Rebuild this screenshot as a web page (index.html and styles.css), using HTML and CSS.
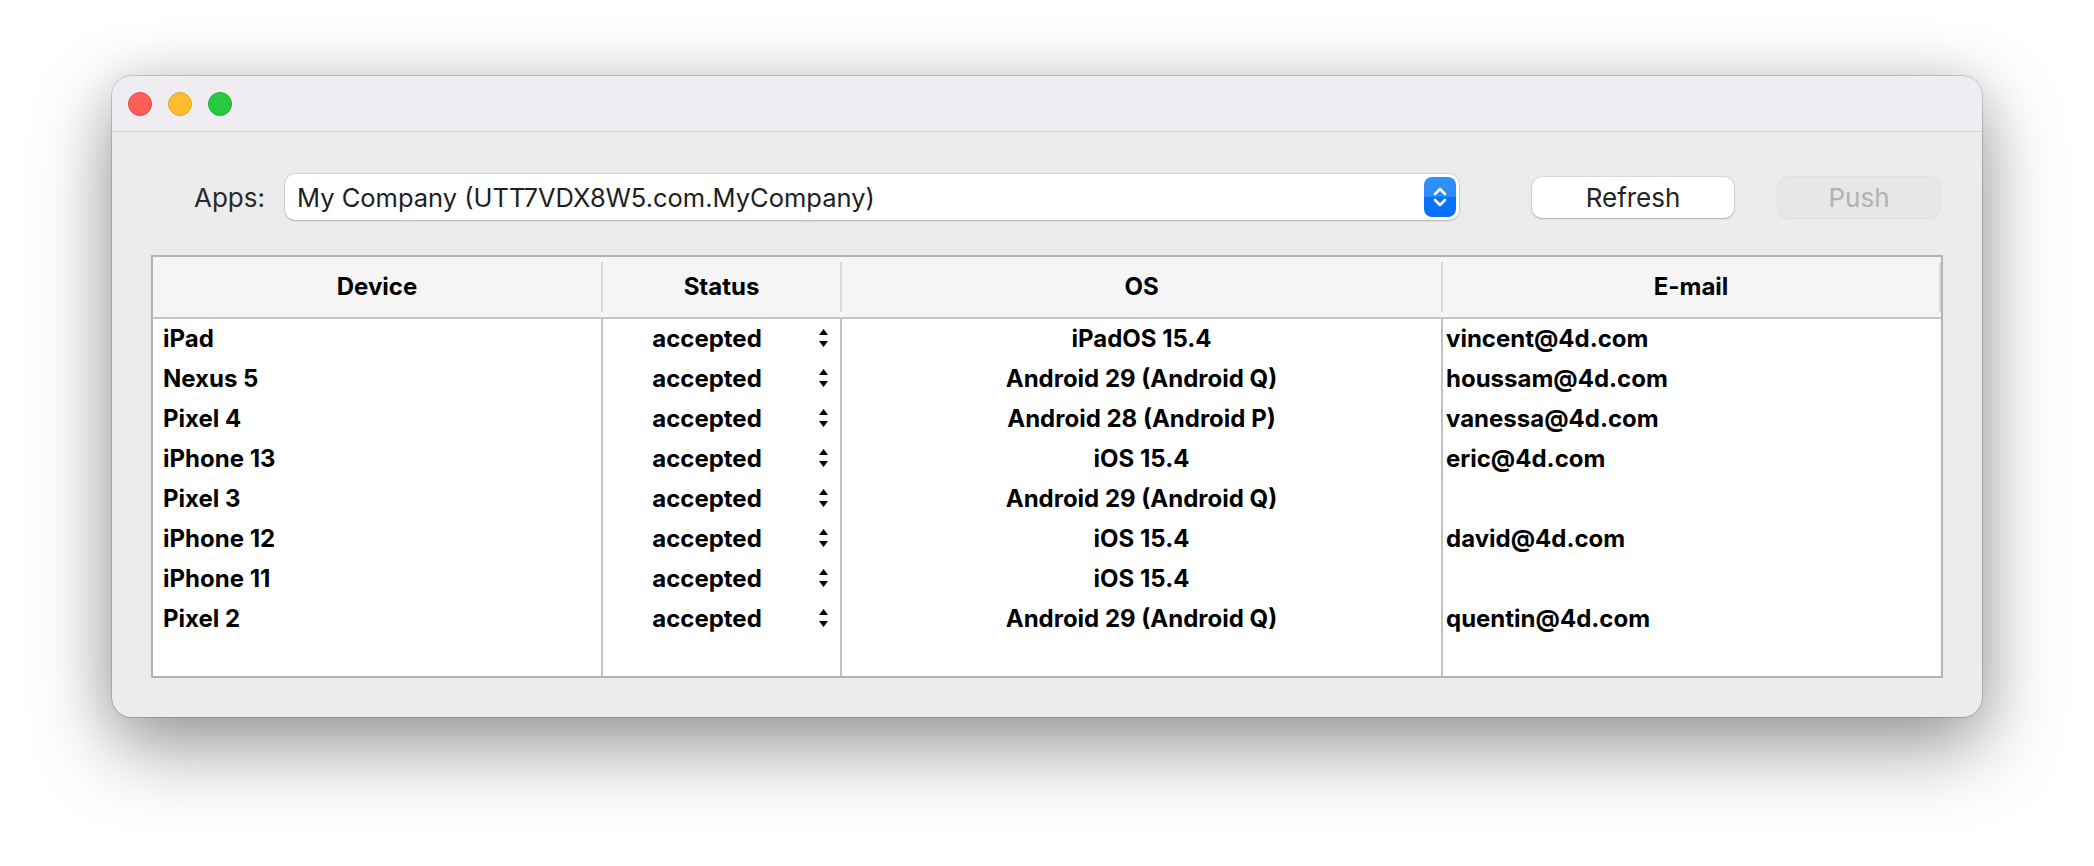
FILE: index.html
```html
<!DOCTYPE html>
<html>
<head>
<meta charset="utf-8">
<link rel="stylesheet" href="styles.css">
</head>
<body>
<div class="window">
  <div class="titlebar">
    <span class="light red"></span>
    <span class="light yellow"></span>
    <span class="light green"></span>
  </div>
  <div class="content">
    <div class="toolbar">
      <span class="label">Apps:</span>
      <div class="popup">
        <span class="popup-text">My Company (UTT7VDX8W5.com.MyCompany)</span>
        <span class="stepper">
          <svg width="32" height="40" viewBox="0 0 32 40"><path d="M11 17 L16 12 L21 17 M11 23 L16 28 L21 23" fill="none" stroke="#fff" stroke-width="2.6" stroke-linecap="round" stroke-linejoin="round"/></svg>
        </span>
      </div>
      <button class="btn refresh">Refresh</button>
      <button class="btn push">Push</button>
    </div>
    <div class="table">
      <div class="thead">
        <div class="th">Device</div>
        <div class="th">Status</div>
        <div class="th">OS</div>
        <div class="th">E-mail</div>
      </div>
      <div class="tbody">
        <div class="td dev">iPad</div><div class="td st"><span>accepted</span><svg width="9" height="18" viewBox="0 0 9 18"><path d="M0 6 L4.5 0 L9 6Z M0 12 L9 12 L4.5 18Z" fill="#000"/></svg></div><div class="td os">iPadOS 15.4</div><div class="td em">vincent@4d.com</div>
        <div class="td dev">Nexus 5</div><div class="td st"><span>accepted</span><svg width="9" height="18" viewBox="0 0 9 18"><path d="M0 6 L4.5 0 L9 6Z M0 12 L9 12 L4.5 18Z" fill="#000"/></svg></div><div class="td os">Android 29 (Android Q)</div><div class="td em">houssam@4d.com</div>
        <div class="td dev">Pixel 4</div><div class="td st"><span>accepted</span><svg width="9" height="18" viewBox="0 0 9 18"><path d="M0 6 L4.5 0 L9 6Z M0 12 L9 12 L4.5 18Z" fill="#000"/></svg></div><div class="td os">Android 28 (Android P)</div><div class="td em">vanessa@4d.com</div>
        <div class="td dev">iPhone 13</div><div class="td st"><span>accepted</span><svg width="9" height="18" viewBox="0 0 9 18"><path d="M0 6 L4.5 0 L9 6Z M0 12 L9 12 L4.5 18Z" fill="#000"/></svg></div><div class="td os">iOS 15.4</div><div class="td em">eric@4d.com</div>
        <div class="td dev">Pixel 3</div><div class="td st"><span>accepted</span><svg width="9" height="18" viewBox="0 0 9 18"><path d="M0 6 L4.5 0 L9 6Z M0 12 L9 12 L4.5 18Z" fill="#000"/></svg></div><div class="td os">Android 29 (Android Q)</div><div class="td em"></div>
        <div class="td dev">iPhone 12</div><div class="td st"><span>accepted</span><svg width="9" height="18" viewBox="0 0 9 18"><path d="M0 6 L4.5 0 L9 6Z M0 12 L9 12 L4.5 18Z" fill="#000"/></svg></div><div class="td os">iOS 15.4</div><div class="td em">david@4d.com</div>
        <div class="td dev">iPhone 11</div><div class="td st"><span>accepted</span><svg width="9" height="18" viewBox="0 0 9 18"><path d="M0 6 L4.5 0 L9 6Z M0 12 L9 12 L4.5 18Z" fill="#000"/></svg></div><div class="td os">iOS 15.4</div><div class="td em"></div>
        <div class="td dev">Pixel 2</div><div class="td st"><span>accepted</span><svg width="9" height="18" viewBox="0 0 9 18"><path d="M0 6 L4.5 0 L9 6Z M0 12 L9 12 L4.5 18Z" fill="#000"/></svg></div><div class="td os">Android 29 (Android Q)</div><div class="td em">quentin@4d.com</div>
        <div class="td fill"></div><div class="td fill"></div><div class="td fill"></div><div class="td fill"></div>
      </div>
    </div>
  </div>
</div>
</body>
</html>
```

FILE: styles.css
```css
html, body {
  margin: 0;
  padding: 0;
  background: #ffffff;
}
html {
  height: 100%;
}
body {
  min-height: 100%;
  box-sizing: border-box;
  padding: 76px 0 0 112px;
  font-family: Inter, "Noto Sans", sans-serif;
}
.window {
  width: 1870px;
  height: 641px;
  border-radius: 20px;
  background: #ececec;
  overflow: hidden;
  box-shadow: 0 0 0 1px rgba(0,0,0,0.16), 0 30px 80px rgba(0,0,0,0.40), 0 0 50px rgba(0,0,0,0.10);
}
.titlebar {
  height: 55px;
  background: #efedf2;
  border-bottom: 1px solid #d3d2d6;
  display: flex;
  align-items: center;
  padding-left: 16px;
  gap: 16px;
}
.light {
  width: 24px;
  height: 24px;
  border-radius: 50%;
  box-sizing: border-box;
}
.red { background: #ff5f57; border: 1px solid #e2463f; }
.yellow { background: #febc2e; border: 1px solid #e1a325; }
.green { background: #28c840; border: 1px solid #1fae32; }

.content {
  padding: 41px 39px 0 39px;
}
.toolbar {
  height: 48px;
  display: flex;
  align-items: center;
  padding-left: 43px;
  padding-right: 3px;
}
.label {
  font-size: 26px;
  color: #2a2a2a;
  width: 91px;
}
.popup {
  width: 1174px;
  height: 46px;
  background: #fff;
  border-radius: 10px;
  box-shadow: 0 0 0 1px rgba(0,0,0,0.08), 0 1px 2px rgba(0,0,0,0.18);
  display: flex;
  align-items: center;
  box-sizing: border-box;
  padding: 0 3px 0 12px;
}
.popup-text {
  flex: 1;
  font-size: 25.5px;
  color: #1e1e1e;
}
.stepper {
  width: 32px;
  height: 40px;
  border-radius: 8px;
  background: linear-gradient(#3190fe 0%, #2a8bfd 50%, #0a72fb 50%, #0a70fa 100%);
  display: flex;
}
.btn {
  font-family: Inter, "Noto Sans", sans-serif;
  font-size: 26px;
  height: 41px;
  border: none;
  border-radius: 10px;
  padding: 0;
}
.refresh {
  width: 202px;
  margin-left: 73px;
  background: #fff;
  color: #242424;
  box-shadow: 0 0 0 1px rgba(0,0,0,0.07), 0 1px 2px rgba(0,0,0,0.2);
}
.push {
  width: 162px;
  margin-left: 44px;
  background: #e7e7e7;
  color: #b2b2b2;
  box-shadow: 0 0 0 1px rgba(0,0,0,0.05);
}

.table {
  margin-top: 34px;
  height: 423px;
  box-sizing: border-box;
  border: 2px solid #b3b3b3;
  background: #fff;
  display: flex;
  flex-direction: column;
  font-weight: 700;
  font-size: 24px;
  color: #000;
}
.thead {
  height: 60px;
  background: #f5f5f5;
  border-bottom: 2px solid #c4c4c4;
  display: grid;
  grid-template-columns: 450px 239px 601px 498px;
  align-items: center;
}
.th {
  height: 50px;
  line-height: 50px;
  text-align: center;
  border-right: 2px solid #d9d9d9;
}
.tbody {
  flex: 1;
  display: grid;
  grid-template-columns: 450px 239px 601px 498px;
  grid-template-rows: repeat(8, 40px) 1fr;
}
.td {
  line-height: 40px;
  white-space: nowrap;
  border-right: 2px solid #c2c2c2;
  box-sizing: border-box;
}
.td:nth-child(4n) {
  border-right: none;
}
.dev { padding-left: 10px; }
.st {
  display: flex;
  align-items: center;
  padding-right: 12px;
}
.st span {
  flex: 1;
  text-align: center;
}
.st svg {
  margin-left: 8px;
  margin-top: -3px;
}
.os { text-align: center; }
.em { padding-left: 3px; }
```
